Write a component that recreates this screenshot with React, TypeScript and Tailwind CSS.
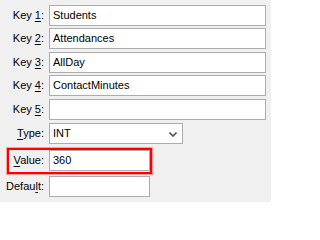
import React from "react";

const font = { fontFamily: '"Liberation Sans", Arial, sans-serif' };

function Label({ pre, key_, post, w = "w-[49px]" }: { pre: string; key_: string; post: string; w?: string }) {
  return (
    <div className={`${w} shrink-0 pr-[5px] text-right leading-none`}>
      {pre}
      <span className="underline underline-offset-[2px]">{key_}</span>
      {post}
    </div>
  );
}

function Box({ value = "", className = "" }: { value?: string; className?: string }) {
  return (
    <div
      className={`flex h-[21px] items-center border border-[#acacac] bg-white pl-[3px] leading-none text-black ${className}`}
    >
      {value}
    </div>
  );
}

const keys = ["Students", "Attendances", "AllDay", "ContactMinutes", ""];
const gaps = ["mt-[5px]", "mt-[2px]", "mt-[3px]", "mt-[2px]", "mt-[3px]"];

export default function App() {
  return (
    <div className="flex h-[202px] w-[271px] flex-col bg-[#f0f0f0] text-[11px] text-black" style={font}>
      {keys.map((k, i) => (
        <div key={i} className={`flex items-center ${gaps[i]}`}>
          <Label pre="Key " key_={String(i + 1)} post=":" />
          <Box value={k} className="w-[217px]" />
        </div>
      ))}

      <div className="mt-[3px] flex items-center">
        <Label pre="" key_="T" post="ype:" />
        <div className="flex h-[21px] w-[134px] items-center justify-between border border-[#acacac] bg-white pl-[3px] pr-[5px] leading-none">
          <span>INT</span>
          <svg width="8" height="5" viewBox="0 0 8 5" className="mt-[1px]">
            <path d="M0.5 0.5 L4 4 L7.5 0.5" fill="none" stroke="#555" strokeWidth="1.6" />
          </svg>
        </div>
      </div>

      <div className="ml-[7px] mt-[4px] flex h-[26px] w-[145px] items-start border-2 border-[#ff0000] shadow-[0_0_0_1px_#ff9c9c]">
        <div className="flex h-[21px] items-center">
          <Label pre="" key_="V" post="alue:" w="w-[40px]" />
          <Box value="360" className="w-[101px]" />
        </div>
      </div>

      <div className="mt-[2px] flex items-center">
        <Label pre="Defau" key_="l" post="t:" />
        <Box className="w-[101px]" />
      </div>
    </div>
  );
}
